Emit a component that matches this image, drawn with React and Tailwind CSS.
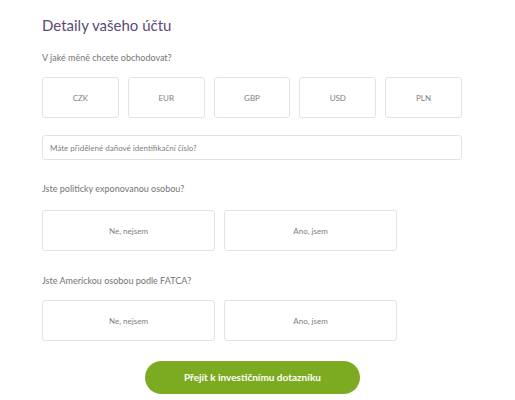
const currencies = ['CZK', 'EUR', 'GBP', 'USD', 'PLN'];

const OptionBox = ({ label, className = '' }) => (
  <button
    type="button"
    className={`flex items-center justify-center rounded-[3px] border border-[#e3e3e3] bg-white text-[8px] text-[#808080] ${className}`}
  >
    {label}
  </button>
);

const YesNo = () => (
  <div className="flex gap-[9px]">
    <OptionBox label="Ne, nejsem" className="h-[41px] w-[173px]" />
    <OptionBox label="Ano, jsem" className="h-[41px] w-[173px]" />
  </div>
);

const App = () => {
  return (
    <div className="min-h-screen bg-white font-['Lato',sans-serif]">
      <div className="w-[420px] ml-[42px] pt-[15px]">
        {/* Title */}
        <h1 className="text-[15px] leading-[20px] text-[#5b4a7a]">Detaily vašeho účtu</h1>

        {/* Currency */}
        <p className="mt-[17px] text-[9px] leading-[12px] text-[#747474]">V jaké měně chcete obchodovat?</p>
        <div className="mt-[13px] flex gap-[9px]">
          {currencies.map((c) => (
            <OptionBox key={c} label={c} className="h-[41px] w-[77px]" />
          ))}
        </div>

        {/* Tax ID */}
        <input
          type="text"
          placeholder="Máte přidělené daňové identifikační číslo?"
          className="mt-[17px] block h-[25px] w-full rounded-[3px] border border-[#e3e3e3] px-[7px] text-[8px] placeholder:text-[#808080] outline-none"
        />

        {/* PEP */}
        <p className="mt-[23px] text-[9px] leading-[12px] text-[#747474]">Jste politicky exponovanou osobou?</p>
        <div className="mt-[15px]">
          <YesNo />
        </div>

        {/* FATCA */}
        <p className="mt-[24px] text-[9px] leading-[12px] text-[#747474]">Jste Americkou osobou podle FATCA?</p>
        <div className="mt-[13px]">
          <YesNo />
        </div>

        {/* Submit */}
        <div className="mt-[20px] flex pl-[103px]">
          <button
            type="button"
            className="h-[33px] w-[215px] rounded-full bg-[#7cab22] text-[10px] font-bold text-white"
          >
            Přejít k investičnímu dotazníku
          </button>
        </div>
      </div>
    </div>
  );
};

export default App;
